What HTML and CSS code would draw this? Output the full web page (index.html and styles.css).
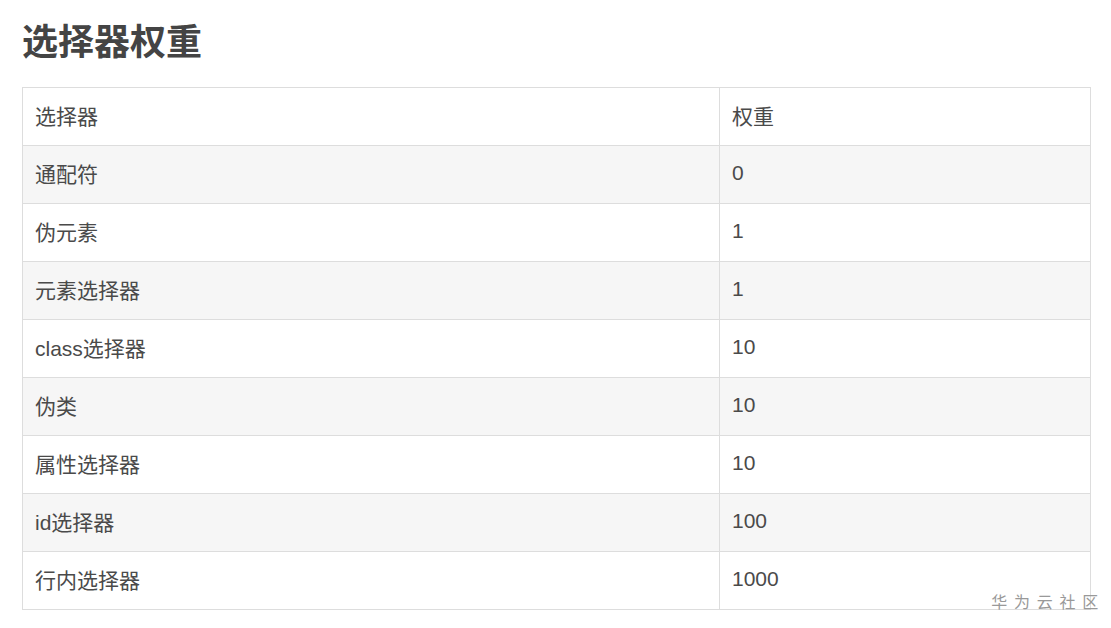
FILE: index.html
```html
<!DOCTYPE html>
<html lang="zh">
<head>
<meta charset="utf-8">
<link rel="stylesheet" href="styles.css">
</head>
<body>
<div class="page">
  <h1 class="title">选择器权重</h1>
  <table class="weights">
    <colgroup><col class="c1"><col class="c2"></colgroup>
    <tbody>
      <tr><td>选择器</td><td>权重</td></tr>
      <tr><td>通配符</td><td>0</td></tr>
      <tr><td>伪元素</td><td>1</td></tr>
      <tr><td>元素选择器</td><td>1</td></tr>
      <tr><td>class选择器</td><td>10</td></tr>
      <tr><td>伪类</td><td>10</td></tr>
      <tr><td>属性选择器</td><td>10</td></tr>
      <tr><td>id选择器</td><td>100</td></tr>
      <tr><td>行内选择器</td><td>1000</td></tr>
    </tbody>
  </table>
</div>
<div class="watermark">华为云社区</div>
</body>
</html>
```
FILE: styles.css
```css
html, body {
  margin: 0;
  padding: 0;
  background: #fff;
}
body {
  font-family: "Liberation Sans", "Noto Sans CJK SC", sans-serif;
  color: #4d4d4d;
  width: 1111px;
  height: 628px;
  overflow: hidden;
  position: relative;
}
.page {
  padding: 14px 21px 0 22px;
}
.title {
  margin: 0 0 23px 0;
  font-size: 36px;
  line-height: 50px;
  font-weight: 700;
  color: #444;
  font-family: "Noto Sans CJK SC", sans-serif;
}
.weights {
  border-collapse: collapse;
  width: 1068px;
  table-layout: fixed;
}
.c1 { width: 697px; }
.c2 { width: 371px; }
.weights td {
  border: 1px solid #ddd;
  height: 58px;
  padding: 0 12px 3px 12px;
  font-size: 21px;
  box-sizing: border-box;
  vertical-align: middle;
  font-family: "Liberation Sans", "Noto Sans CJK SC", sans-serif;
  color: #4a4a4a;
}
.weights tr:nth-child(even) td { background: #f6f6f6; }
.watermark {
  position: absolute;
  right: 6px;
  top: 589px;
  font-size: 16px;
  letter-spacing: 6.75px;
  color: #999;
  font-family: "Noto Sans CJK SC", sans-serif;
}
```
